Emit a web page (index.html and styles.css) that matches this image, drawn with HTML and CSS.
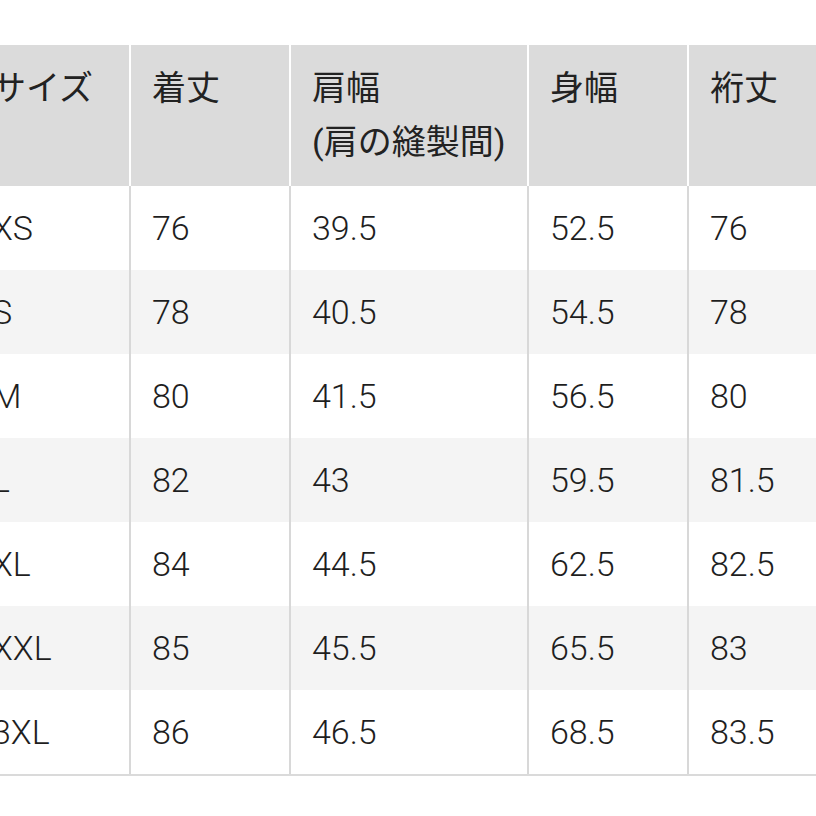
FILE: index.html
```html
<!DOCTYPE html>
<html lang="ja">
<head>
<meta charset="utf-8">
<link rel="stylesheet" href="styles.css">
</head>
<body>
<table class="size-table">
  <colgroup>
    <col class="c-narrow"><col class="c-narrow"><col class="c-wide"><col class="c-narrow"><col class="c-narrow">
  </colgroup>
  <thead>
    <tr>
      <th>サイズ</th>
      <th>着丈</th>
      <th>肩幅<br>(肩の縫製間)</th>
      <th>身幅</th>
      <th>裄丈</th>
    </tr>
  </thead>
  <tbody>
    <tr><td>XS</td><td>76</td><td>39.5</td><td>52.5</td><td>76</td></tr>
    <tr><td>S</td><td>78</td><td>40.5</td><td>54.5</td><td>78</td></tr>
    <tr><td>M</td><td>80</td><td>41.5</td><td>56.5</td><td>80</td></tr>
    <tr><td>L</td><td>82</td><td>43</td><td>59.5</td><td>81.5</td></tr>
    <tr><td>XL</td><td>84</td><td>44.5</td><td>62.5</td><td>82.5</td></tr>
    <tr><td>XXL</td><td>85</td><td>45.5</td><td>65.5</td><td>83</td></tr>
    <tr><td>3XL</td><td>86</td><td>46.5</td><td>68.5</td><td>83.5</td></tr>
  </tbody>
</table>
</body>
</html>
```

FILE: styles.css
```css
html, body {
  margin: 0;
  padding: 0;
  background: #ffffff;
  overflow: hidden;
}

body {
  width: 816px;
  height: 816px;
  font-family: Roboto, "Noto Sans CJK JP", sans-serif;
  color: #222222;
}

.size-table {
  margin-top: 45px;
  margin-left: -31px;
  width: 878px;
  table-layout: fixed;
  border-collapse: separate;
  border-spacing: 0;
  border-bottom: 2px solid #dadada;
}

.c-narrow { width: 160px; }
.c-wide { width: 238px; }

.size-table th {
  height: 141px;
  box-sizing: border-box;
  background: #dbdbdb;
  border-left: 2px solid #ffffff;
  padding: 16px 0 0 21px;
  vertical-align: top;
  text-align: left;
  font-family: Roboto, "Noto Sans CJK JP", sans-serif;
  font-weight: 400;
  font-size: 34px;
  line-height: 54px;
  white-space: nowrap;
}

.size-table td {
  height: 84px;
  box-sizing: border-box;
  border-left: 2px solid #d8d8d8;
  padding: 0 0 0 21px;
  vertical-align: middle;
  text-align: left;
  font-weight: 300;
  font-size: 34px;
  line-height: 40px;
  white-space: nowrap;
  color: #1e1e1e;
}

.size-table tbody tr:nth-child(even) td {
  background: #f4f4f4;
}
```
